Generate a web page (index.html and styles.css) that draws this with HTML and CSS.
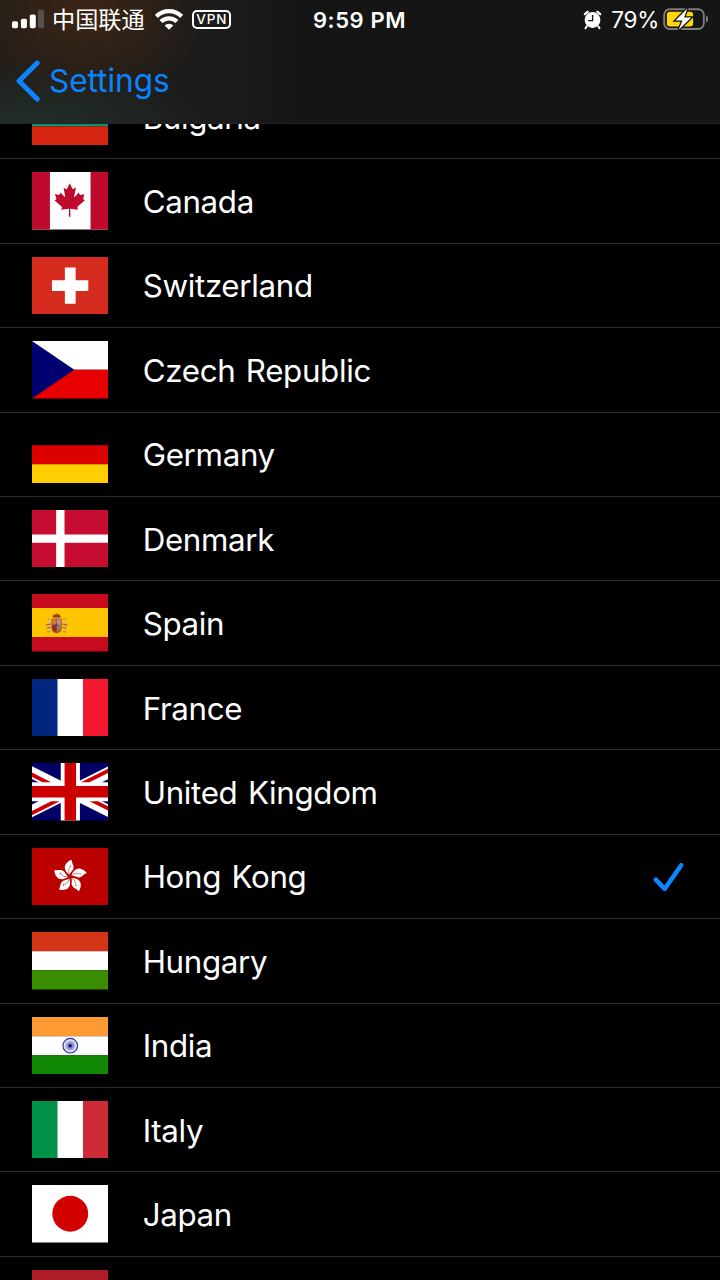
FILE: index.html
```
<!DOCTYPE html>
<html lang="en">
<head>
<meta charset="UTF-8">
<title>Settings</title>
<meta name="viewport" content="width=device-width, initial-scale=1.0">
<link rel="stylesheet" href="styles.css">
</head>
<body>
<div class="screen">
    <header class="header">
        <div class="status">
            <div class="status-left">
                <svg class="signal" width="32" height="20" viewBox="0 0 32 20">
                    <g fill="#fff">
                        <rect x="0" y="12.2" width="6" height="7" rx="1.6"/>
                        <rect x="8.9" y="9.7" width="6" height="9.5" rx="1.6"/>
                        <rect x="17.8" y="5.5" width="6" height="13.7" rx="1.6"/>
                    </g>
                    <rect x="26" y="0.5" width="6" height="18.7" rx="1.6" fill="#574f49"/>
                </svg>
                <span class="carrier">中国联通</span>
                <svg class="wifi" width="28" height="21" viewBox="0 0 28 21">
                    <g fill="none" stroke="#fff" stroke-width="4.2">
                        <path d="M1.4 7.4a17.8 17.8 0 0 1 25.2 0"/>
                        <path d="M6 12.6a11.3 11.3 0 0 1 16 0"/>
                    </g>
                    <path d="M14 20.8l-4.4-4.3a6.3 6.3 0 0 1 8.8 0z" fill="#fff"/>
                </svg>
                <span class="vpn">VPN</span>
            </div>
            <span class="time">9:59 PM</span>
            <div class="status-right">
                <svg class="alarm" width="19" height="20" viewBox="0 0 19 20">
                    <circle cx="9.5" cy="10" r="7.9" fill="#fff"/>
                    <path d="M1.9 4.2L4.6 1.8M17.1 4.2L14.4 1.8" stroke="#fff" stroke-width="2.4" stroke-linecap="round"/>
                    <path d="M3.8 16.2l-1.3 2M15.2 16.2l1.3 2" stroke="#fff" stroke-width="2" stroke-linecap="round"/>
                    <path d="M9.6 5v5.6H5.2" fill="none" stroke="#161616" stroke-width="1.4"/>
                </svg>
                <span class="percent">79%</span>
                <svg class="battery" width="47" height="24" viewBox="0 0 47 24">
                    <rect x="1.2" y="2.2" width="39.6" height="19.8" rx="5.6" fill="none" stroke="#7d7d7d" stroke-width="1.9"/>
                    <path d="M43 8.6c2.8.8 2.8 6.2 0 7z" fill="#7d7d7d"/>
                    <rect x="3.9" y="4.8" width="26.2" height="14.6" rx="3" fill="#ffd60a"/>
                    <path d="M24.3 1.4L12.5 13.4h7l-3.8 9.4L28.3 10.6h-7.2z" fill="#fff" stroke="#161616" stroke-width="2.6" paint-order="stroke"/>
                </svg>
            </div>
        </div>
        <a class="back">
            <svg width="24" height="42" viewBox="0 0 24 42">
                <path d="M21.2 3L3 21l18.2 18" fill="none" stroke="#0a84ff" stroke-width="5" stroke-linecap="round" stroke-linejoin="round"/>
            </svg>
            <span>Settings</span>
        </a>
    </header>

    <div class="list-wrap">
        <ul class="list">
            <li class="row">
                <svg class="flag" viewBox="0 0 640 480">
                    <path fill="#fff" d="M0 0h640v160H0z"/>
                    <path fill="#00966e" d="M0 160h640v160H0z"/>
                    <path fill="#d62612" d="M0 320h640v160H0z"/>
                </svg>
                <span class="name">Bulgaria</span>
            </li>
            <li class="row">
                <svg class="flag" viewBox="0 0 640 480">
                    <path fill="#fff" d="M0 0h640v480H0z"/>
                    <path fill="#bf0a30" d="M0 0h150.1v480H0zm489.8 0H640v480H489.8zM201 232l-13.3 4.4 61.4 54c4.7 13.7-1.6 17.8-5.6 25l66.6-8.4-1.6 67 13.9-.3-3.1-66.6 66.7 8c-4.1-8.7-7.8-13.3-4-27.2l61.3-51-10.7-4c-8.8-6.8 3.8-32.6 5.6-48.9 0 0-35.7 12.3-38 5.8l-9.2-17.5-32.6 35.8c-3.5.9-5-.5-5.9-3.5l15-74.8-23.8 13.4c-2 .9-4 .1-5.2-2.2l-23-46-23.6 47.8c-1.8 1.7-3.6 1.9-5 .7L264 130.8l13.7 74.1c-1.1 3-3.7 3.8-6.7 2.2l-31.2-35.3c-4 6.5-6.8 17.1-12.2 19.5-5.4 2.3-23.5-4.5-35.6-7 4.2 14.8 17 39.6 9 47.7z"/>
                </svg>
                <span class="name">Canada</span>
            </li>
            <li class="row">
                <svg class="flag" viewBox="0 0 640 480">
                    <path fill="#d52b1e" d="M0 0h640v480H0z"/>
                    <path fill="#fff" d="M167 195h304v90H167zM275 88h90v304h-90z"/>
                </svg>
                <span class="name">Switzerland</span>
            </li>
            <li class="row">
                <svg class="flag" viewBox="0 0 640 480">
                    <path fill="#fff" d="M0 0h640v240H0z"/>
                    <path fill="#e80000" d="M0 240h640v240H0z"/>
                    <path fill="#00006f" d="M0 0l354 240L0 480z"/>
                </svg>
                <span class="name">Czech Republic</span>
            </li>
            <li class="row">
                <svg class="flag" viewBox="0 0 640 480">
                    <path fill="#000" d="M0 0h640v160H0z"/>
                    <path fill="#d00" d="M0 160h640v160H0z"/>
                    <path fill="#ffce00" d="M0 320h640v160H0z"/>
                </svg>
                <span class="name">Germany</span>
            </li>
            <li class="row">
                <svg class="flag" viewBox="0 0 640 480">
                    <path fill="#c60c30" d="M0 0h640v480H0z"/>
                    <path fill="#fff" d="M0 204h640v70H0zM202 0h70v480h-70z"/>
                </svg>
                <span class="name">Denmark</span>
            </li>
            <li class="row">
                <svg class="flag" viewBox="0 0 640 480">
                    <path fill="#c60b1e" d="M0 0h640v480H0z"/>
                    <path fill="#ffc400" d="M0 118h640v242H0z"/>
                    <!-- coat of arms -->
                    <path fill="#ad3a19" d="M172 188q5-18 34-20 30 2 35 20l-8 12h-54z"/>
                    <path fill="#c8b100" d="M201 156h10v12h-10zM178 196h57v8h-57z"/>
                    <path fill="#a4503d" d="M163 206h86v82q-2 36-43 40-41-4-43-40z"/>
                    <path fill="#c58a98" d="M208 212h34v46h-34z"/>
                    <path fill="#c6803a" d="M170 213h32v42h-32z"/>
                    <path fill="#8c2c2c" d="M170 260h34v56q-32-6-34-28z"/>
                    <path fill="#a97a3e" d="M210 262h32v26q-2 22-32 28z"/>
                    <circle cx="206" cy="258" r="11" fill="#3f4fa0"/>
                    <path fill="#c9b8a0" d="M134 216h12v94h-12zM266 216h12v94h-12z"/>
                    <path fill="#c0502a" d="M118 254l42-8v10l-42 10zM294 254l-42-8v10l42 10zM124 282l34-8v9l-34 8zM288 282l-34-8v9l34 8z"/>
                    <path fill="#a9903c" d="M127 206h24v8h-24zM261 206h24v8h-24zM126 312h28v10h-28zM258 312h28v10h-28z"/>
                </svg>
                <span class="name">Spain</span>
            </li>
            <li class="row">
                <svg class="flag" viewBox="0 0 640 480">
                    <path fill="#fff" d="M0 0h640v480H0z"/>
                    <path fill="#00267f" d="M0 0h213.3v480H0z"/>
                    <path fill="#f31830" d="M426.7 0H640v480H426.7z"/>
                </svg>
                <span class="name">France</span>
            </li>
            <li class="row">
                <svg class="flag" viewBox="0 0 640 480">
                    <g transform="translate(80) scale(.94)">
                        <path fill="#006" d="M-256 0H768v512H-256z"/>
                        <path fill="#fff" d="M-256 0v57.2L653.5 512H768v-57.2L-141.5 0zM768 0v57.2L-141.5 512H-256v-57.2L653.5 0z"/>
                        <path fill="#fff" d="M170.7 0v512h170.6V0zM-256 170.7v170.6H768V170.7z"/>
                        <path fill="#c00" d="M-256 204.8v102.4H768V204.8zM204.8 0v512h102.4V0zM-256 512L85.3 341.3h76.4L-179.7 512zm0-512L85.3 170.7H9L-256 38.2zm606.4 170.7L691.7 0H768L426.7 170.7zM768 512L426.7 341.3H503l265 132.5z"/>
                    </g>
                </svg>
                <span class="name">United Kingdom</span>
            </li>
            <li class="row">
                <svg class="flag" viewBox="0 0 640 480">
                    <defs>
                        <g id="petal">
                            <path fill="#fff" d="M-2-14C-40-38-54-76-36-104-24-124-2-138 16-142 8-124 30-106 30-78 30-50 2-42-2-14z"/>
                            <path fill="none" stroke="#b00" stroke-width="4" d="M-2-14C-18-44-12-66 0-80"/>
                            <circle cx="3" cy="-88" r="5" fill="#b00"/>
                        </g>
                    </defs>
                    <path fill="#b00" d="M0 0h640v480H0z"/>
                    <g transform="translate(318 240)">
                        <use href="#petal"/>
                        <use href="#petal" transform="rotate(72)"/>
                        <use href="#petal" transform="rotate(144)"/>
                        <use href="#petal" transform="rotate(216)"/>
                        <use href="#petal" transform="rotate(288)"/>
                    </g>
                </svg>
                <span class="name">Hong Kong</span>
                <svg class="check" width="34" height="34" viewBox="0 0 34 34">
                    <path d="M3.8 19.6L12.8 28.8 29.2 5.3" fill="none" stroke="#0a84ff" stroke-width="4.6" stroke-linecap="round" stroke-linejoin="round"/>
                </svg>
            </li>
            <li class="row">
                <svg class="flag" viewBox="0 0 640 480">
                    <path fill="#d43516" d="M0 0h640v160H0z"/>
                    <path fill="#fff" d="M0 160h640v160H0z"/>
                    <path fill="#388d00" d="M0 320h640v160H0z"/>
                </svg>
                <span class="name">Hungary</span>
            </li>
            <li class="row">
                <svg class="flag" viewBox="0 0 640 480">
                    <path fill="#f93" d="M0 0h640v160H0z"/>
                    <path fill="#fff" d="M0 160h640v160H0z"/>
                    <path fill="#128807" d="M0 320h640v160H0z"/>
                    <circle cx="320" cy="240" r="61" fill="#e2e2f4" stroke="#2a2a98" stroke-width="9"/>
                    <circle cx="320" cy="240" r="42" fill="#b0b0dc"/>
                    <circle cx="320" cy="240" r="27" fill="#8080c4"/>
                    <circle cx="320" cy="240" r="13" fill="#008"/>
                </svg>
                <span class="name">India</span>
            </li>
            <li class="row">
                <svg class="flag" viewBox="0 0 640 480">
                    <path fill="#fff" d="M0 0h640v480H0z"/>
                    <path fill="#009246" d="M0 0h213.3v480H0z"/>
                    <path fill="#ce2b37" d="M426.7 0H640v480H426.7z"/>
                </svg>
                <span class="name">Italy</span>
            </li>
            <li class="row">
                <svg class="flag" viewBox="0 0 640 480">
                    <path fill="#fff" d="M0 0h640v480H0z"/>
                    <circle cx="320" cy="240" r="150" fill="#d30000"/>
                </svg>
                <span class="name">Japan</span>
            </li>
            <li class="row">
                <svg class="flag" viewBox="0 0 640 480">
                    <path fill="#ae1c28" d="M0 0h640v160H0z"/>
                    <path fill="#fff" d="M0 160h640v160H0z"/>
                    <path fill="#21468b" d="M0 320h640v160H0z"/>
                </svg>
            </li>
        </ul>
    </div>
</div>
</body>
</html>
```
FILE: styles.css
```
* {
    margin: 0;
    padding: 0;
    box-sizing: border-box;
}

body {
    background: #000;
    color: #fff;
    font-family: Inter, "Noto Sans CJK SC", sans-serif;
}

.screen {
    display: flex;
    flex-direction: column;
    width: 720px;
    height: 1280px;
    overflow: hidden;
}

.header {
    flex: none;
    height: 124px;
    border-bottom: 1px solid #222;
    background:
        radial-gradient(ellipse 130px 90px at 85px 15px, rgba(70, 40, 18, 0.75), rgba(70, 40, 18, 0)),
        radial-gradient(ellipse 190px 60px at 30px 124px, rgba(36, 54, 46, 0.7), rgba(36, 54, 46, 0)),
        linear-gradient(90deg, #1e1d1b 0, #1b1b1b 230px, #151515 300px, #151515 100%);
}

.status {
    display: grid;
    grid-template-columns: 1fr auto 1fr;
    align-items: center;
    height: 39px;
    padding: 0 10px 0 12px;
}

.status-left,
.status-right {
    display: flex;
    align-items: center;
}

.status-right {
    justify-content: flex-end;
}

.signal {
    margin-top: -1px;
}

.carrier {
    margin: -3px 0 0 8px;
    font-family: "Noto Sans CJK SC", sans-serif;
    font-size: 23.2px;
    line-height: 36px;
}

.wifi {
    margin: -1px 0 0 10px;
}

.vpn {
    margin-left: 9px;
    border: 2px solid #fff;
    border-radius: 5px;
    width: 39px;
    height: 19px;
    font-size: 13.5px;
    font-weight: 500;
    line-height: 15px;
    letter-spacing: 0.8px;
    text-indent: 1px;
    text-align: center;
}

.time {
    margin-right: 3px;
    font-size: 22px;
    font-weight: 600;
    letter-spacing: 0.6px;
}

.percent {
    margin: 0 4px 0 9px;
    font-size: 22.5px;
    letter-spacing: -0.3px;
}

.battery {
    margin-top: -1px;
}

.back {
    display: flex;
    align-items: center;
    height: 84px;
    padding-left: 16px;
    color: #0a84ff;
    font-size: 31.5px;
}

.back span {
    margin: -2px 0 0 9px;
}

.list-wrap {
    flex: 1;
    min-height: 0;
    overflow: hidden;
}

.list {
    margin-top: -49.1px;
    list-style: none;
}

.row {
    display: flex;
    align-items: center;
    height: 84.43px;
    padding: 0 34px 0 31.7px;
    border-bottom: 1px solid #2c2c2e;
}

.flag {
    flex: none;
    width: 76.5px;
    height: 57.4px;
}

.name {
    flex: 1;
    margin: 2px 0 0 34.5px;
    font-size: 31.3px;
    letter-spacing: -0.33px;
    word-spacing: 2px;
}

.check {
    margin-top: 1px;
}
```
